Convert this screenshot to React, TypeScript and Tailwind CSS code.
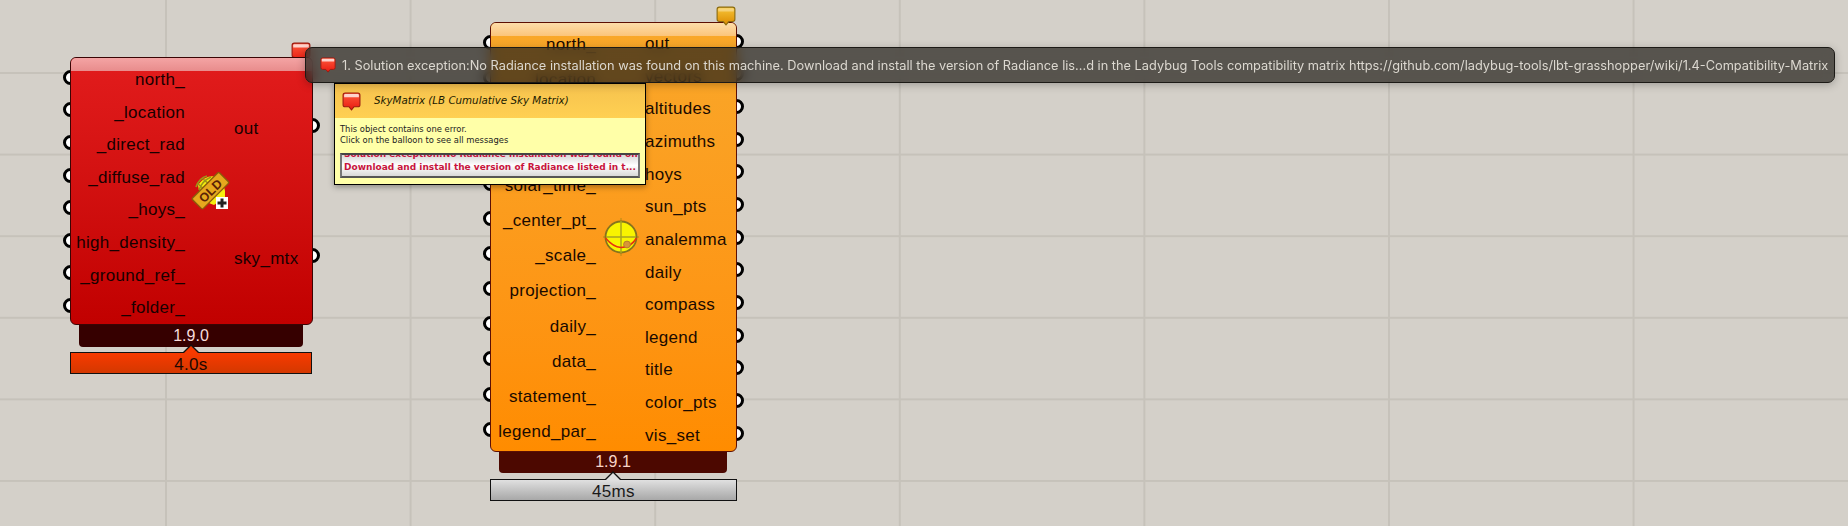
import React from "react";

function Balloon({ w, h, tone, id }: { w: number; h: number; tone: "red" | "gold"; id: string }) {
  const top = tone === "red" ? "#ff5a3c" : "#f7c63a";
  const bottom = tone === "red" ? "#e81a10" : "#dc8a00";
  const stroke = tone === "red" ? "#9a1a10" : "#8a6a10";
  return (
    <svg width={w} height={h} viewBox="0 0 18 18" className="block shrink-0">
      <defs>
        <linearGradient id={id} x1="0" y1="0" x2="0" y2="1">
          <stop offset="0" stopColor={top} />
          <stop offset="1" stopColor={bottom} />
        </linearGradient>
      </defs>
      <path
        d="M3 1 H15 Q17 1 17 3 V12 Q17 14 15 14 H11.5 L9 17 L6.5 14 H3 Q1 14 1 12 V3 Q1 1 3 1 Z"
        fill={`url(#${id})`}
        stroke={stroke}
        strokeWidth="1"
      />
      <path d="M3 2 H15 Q16 2 16 3 V5 H2 V3 Q2 2 3 2 Z" fill="#ffffff" opacity={tone === "red" ? 0.75 : 0.35} />
    </svg>
  );
}

function Port({ h }: { h: string }) {
  return (
    <div className={`flex items-center justify-center ${h}`}>
      <div className="h-[15px] w-[15px] shrink-0 rounded-full border-[3.5px] border-black bg-white" />
    </div>
  );
}

function OldIcon() {
  return (
    <svg width="40" height="40" viewBox="0 0 40 40" className="block">
      <path d="M8 14 Q16 3 27 6 Q36 12 35 26 L24 34 Q10 30 8 14 Z" fill="#f6ee10" />
      <path d="M6 16 Q9 7 17 5 M9 19 Q12 10 21 6 M7 12 L16 20 M12 7 L21 15" stroke="#9c9618" strokeWidth="1.6" fill="none" />
      <g transform="rotate(-45 20.5 19.7)">
        <rect x="1.5" y="12.2" width="38" height="15" rx="1.5" fill="#e6a81e" stroke="#8a5c0a" strokeWidth="1.4" />
        <text
          x="20.5"
          y="24.2"
          textAnchor="middle"
          fontSize="12.5"
          fontWeight="700"
          fill="#5a2206"
          fontFamily="'Liberation Sans', sans-serif"
        >
          OLD
        </text>
      </g>
      <rect x="26" y="26" width="12" height="12" fill="#ffffff" />
      <path d="M32 27.5 V36.5 M27.5 32 H36.5" stroke="#222222" strokeWidth="3" />
    </svg>
  );
}

function SunIcon() {
  return (
    <svg width="36" height="40" viewBox="0 0 36 40" className="block">
      <path d="M18 1 V39 M0 20 H36" stroke="#c89018" strokeWidth="1.4" />
      <circle cx="18" cy="20" r="15.5" fill="#f8f400" stroke="#86741c" strokeWidth="1.8" />
      <path d="M18 4 V36 M3 20 H33" stroke="#a8a420" strokeWidth="1.5" />
      <path d="M2.5 21 Q10 30 18 30.5 Q28 30.5 33.5 21" stroke="#e83010" strokeWidth="1.5" fill="none" />
      <circle cx="24" cy="27.5" r="3.4" fill="#d89438" stroke="#b87c2c" />
    </svg>
  );
}

function Node({
  className,
  bodyH,
  bodyW,
  bodyClass,
  shineClass,
  inputs,
  outputs,
  inputH,
  outputH,
  padIn,
  padOut,
  leftW,
  outText,
  icon,
}: {
  className: string;
  bodyH: string;
  bodyW: string;
  bodyClass: string;
  shineClass: string;
  inputs: string[];
  outputs: string[];
  inputH: string;
  outputH: string;
  padIn: string;
  padOut: string;
  leftW: string;
  outText: string;
  icon: React.ReactNode;
}) {
  return (
    <div className={`absolute flex ${className}`}>
      <div className={`-mr-[8px] flex w-[15px] flex-col ${padIn}`}>
        {inputs.map((n, i) => (
          <Port key={i} h={inputH} />
        ))}
      </div>
      <div className={`relative z-10 flex overflow-hidden rounded-[6px] border-[1.5px] ${bodyH} ${bodyW} ${bodyClass}`}>
        <div className={`absolute inset-x-0 top-0 h-[13px] ${shineClass}`} />
        <div className={`relative flex shrink-0 flex-col text-right ${leftW} ${padIn}`}>
          {inputs.map((n) => (
            <div key={n} className={`flex items-center justify-end pt-[3px] ${inputH}`}>
              {n}
            </div>
          ))}
        </div>
        <div className="relative flex w-[49px] shrink-0 items-center justify-center">{icon}</div>
        <div className={`relative flex flex-col ${padOut}`}>
          {outputs.map((n) => (
            <div key={n} className={`flex items-center whitespace-nowrap ${outText} ${outputH}`}>
              {n}
            </div>
          ))}
        </div>
      </div>
      <div className={`-ml-[8px] flex w-[15px] flex-col ${padOut}`}>
        {outputs.map((n, i) => (
          <Port key={i} h={outputH} />
        ))}
      </div>
    </div>
  );
}

function Notch({ fill, className }: { fill: string; className: string }) {
  return (
    <svg width="18" height="9" viewBox="0 0 18 9" className={`absolute block ${className}`}>
      <path d="M1 9 L9 1 L17 9" fill={fill} stroke="#111111" strokeWidth="1.4" />
    </svg>
  );
}

const sans = "font-['Liberation_Sans',Arial,sans-serif]";

export default function App() {
  return (
    <div className={`relative h-[526px] w-[1848px] overflow-hidden bg-[#d4d0c9] text-[17px] tracking-[0.3px] text-[#1b0505] ${sans}`}>
      <div className="absolute inset-0 bg-[linear-gradient(to_right,#c6c2ba_2px,transparent_2px),linear-gradient(to_bottom,#c6c2ba_2px,transparent_2px)] bg-[size:244.6px_81.6px] bg-[position:165px_72px]" />

      <div className="absolute left-[291px] top-[42px]">
        <Balloon w={20} h={20} tone="red" id="b1" />
      </div>
      <Node
        className="left-[63px] top-[57px]"
        bodyH="h-[268px]"
        bodyW="w-[243px]"
        bodyClass="border-[#3a0404] bg-gradient-to-b from-[#e21c1c] to-[#c10000] text-[#180000]"
        shineClass="bg-gradient-to-b from-[#f4a4a4] to-[#e88c8c]"
        inputs={["north_", "_location", "_direct_rad", "_diffuse_rad", "_hoys_", "high_density_", "_ground_ref_", "_folder_"]}
        outputs={["out", "sky_mtx"]}
        inputH="h-[32.6px]"
        outputH="h-[130.4px]"
        padIn="pt-[4px]"
        padOut="pt-[3px]"
        leftW="w-[114px]"
        outText="pt-[5px]"
        icon={<OldIcon />}
      />
      <div className="absolute left-[79px] top-[325px] flex h-[22px] w-[224px] items-center justify-center rounded-b-[4px] bg-[#360000] text-[16px] tracking-normal text-[#f8dcdc]">
        1.9.0
      </div>
      <div className="absolute left-[70px] top-[352px] flex h-[22px] w-[242px] items-center justify-center border-[1.5px] border-[#111111] bg-gradient-to-b from-[#f83a00] to-[#d43800] pt-[3px] text-[#1c0800]">
        4.0s
        <Notch fill="#f83a00" className="left-[111px] top-[-9px]" />
      </div>

      <div className="absolute left-[716px] top-[6px] z-20">
        <Balloon w={20} h={20} tone="gold" id="b2" />
      </div>
      <Node
        className="left-[483px] top-[22px]"
        bodyH="h-[430px]"
        bodyW="w-[247px]"
        bodyClass="border-[#5c0f04] bg-gradient-to-b from-[#f9a82a] to-[#ff8c00] text-[#1a0a00]"
        shineClass="bg-gradient-to-b from-[#fdddaa] to-[#fbc47a]"
        inputs={[
          "north_",
          "_location",
          "hoys_",
          "dl_saving_",
          "solar_time_",
          "_center_pt_",
          "_scale_",
          "projection_",
          "daily_",
          "data_",
          "statement_",
          "legend_par_",
        ]}
        outputs={[
          "out",
          "vectors",
          "altitudes",
          "azimuths",
          "hoys",
          "sun_pts",
          "analemma",
          "daily",
          "compass",
          "legend",
          "title",
          "color_pts",
          "vis_set",
        ]}
        inputH="h-[35.17px]"
        outputH="h-[32.65px]"
        padIn="pt-[3px]"
        padOut="pt-[3px]"
        leftW="w-[105px]"
        outText="pt-[3px]"
        icon={<SunIcon />}
      />
      <div className="absolute left-[499px] top-[451px] flex h-[22px] w-[228px] items-center justify-center rounded-b-[4px] bg-[#4c0800] text-[16px] tracking-normal text-[#f8d4c8]">
        1.9.1
      </div>
      <div className="absolute left-[490px] top-[479px] flex h-[22px] w-[247px] items-center justify-center border-[1.5px] border-[#111111] bg-gradient-to-b from-[#e0e0e0] to-[#a8a8a8] pt-[3px] text-[#1a1a1a]">
        45ms
        <Notch fill="#e0e0e0" className="left-[113px] top-[-9px]" />
      </div>

      <div className="absolute left-[334px] top-[83px] z-30 flex h-[102px] w-[312px] flex-col border border-black bg-[#ffffa8] shadow-[0_2px_6px_rgba(0,0,0,0.35)] font-['DejaVu_Sans',Verdana,sans-serif] tracking-normal">
        <div className="flex h-[34px] shrink-0 items-center gap-[13px] bg-gradient-to-b from-[#f6c24e] to-[#ffd052] pl-[7px] text-[10.3px] italic text-[#1a1a00]">
          <Balloon w={19} h={19} tone="red" id="b3" />
          <span>SkyMatrix (LB Cumulative Sky Matrix)</span>
        </div>
        <div className="flex flex-col px-[5px] pt-[6px] text-[8.4px] leading-[11px] text-[#222222]">
          <span>This object contains one error.</span>
          <span>Click on the balloon to see all messages</span>
        </div>
        <div className="mx-[5px] mt-[7px] flex h-[25px] flex-col justify-end overflow-hidden whitespace-nowrap border-2 border-x-[#777777] border-b-[#555555] border-t-[#444444] bg-gradient-to-b from-[#d8d8d8] via-[#ffffff] to-[#d8d8d8] px-[2px] pb-[2px] text-[9px] font-bold leading-[13px] text-[#c8143c]">
          <span>Solution exception:No Radiance installation was found on</span>
          <span>Download and install the version of Radiance listed in t...</span>
        </div>
      </div>

      <div className="absolute left-[305px] top-[47px] z-40 flex h-[36px] w-[1530px] items-center gap-[6px] rounded-[7px] border border-[#1c1a16] bg-[#221f19]/70 pl-[14px] font-['Inter',sans-serif] text-[12.79px] tracking-normal whitespace-nowrap text-[#dcd8d0] shadow-[0_2px_8px_rgba(0,0,0,0.25)] backdrop-blur-[6px]">
        <Balloon w={16} h={16} tone="red" id="b4" />
        <span className="mt-[2px]">
          1. Solution exception:No Radiance installation was found on this machine. Download and install the version of Radiance lis...d in the Ladybug Tools compatibility matrix https://github.com/ladybug-tools/lbt-grasshopper/wiki/1.4-Compatibility-Matrix
        </span>
      </div>
    </div>
  );
}
